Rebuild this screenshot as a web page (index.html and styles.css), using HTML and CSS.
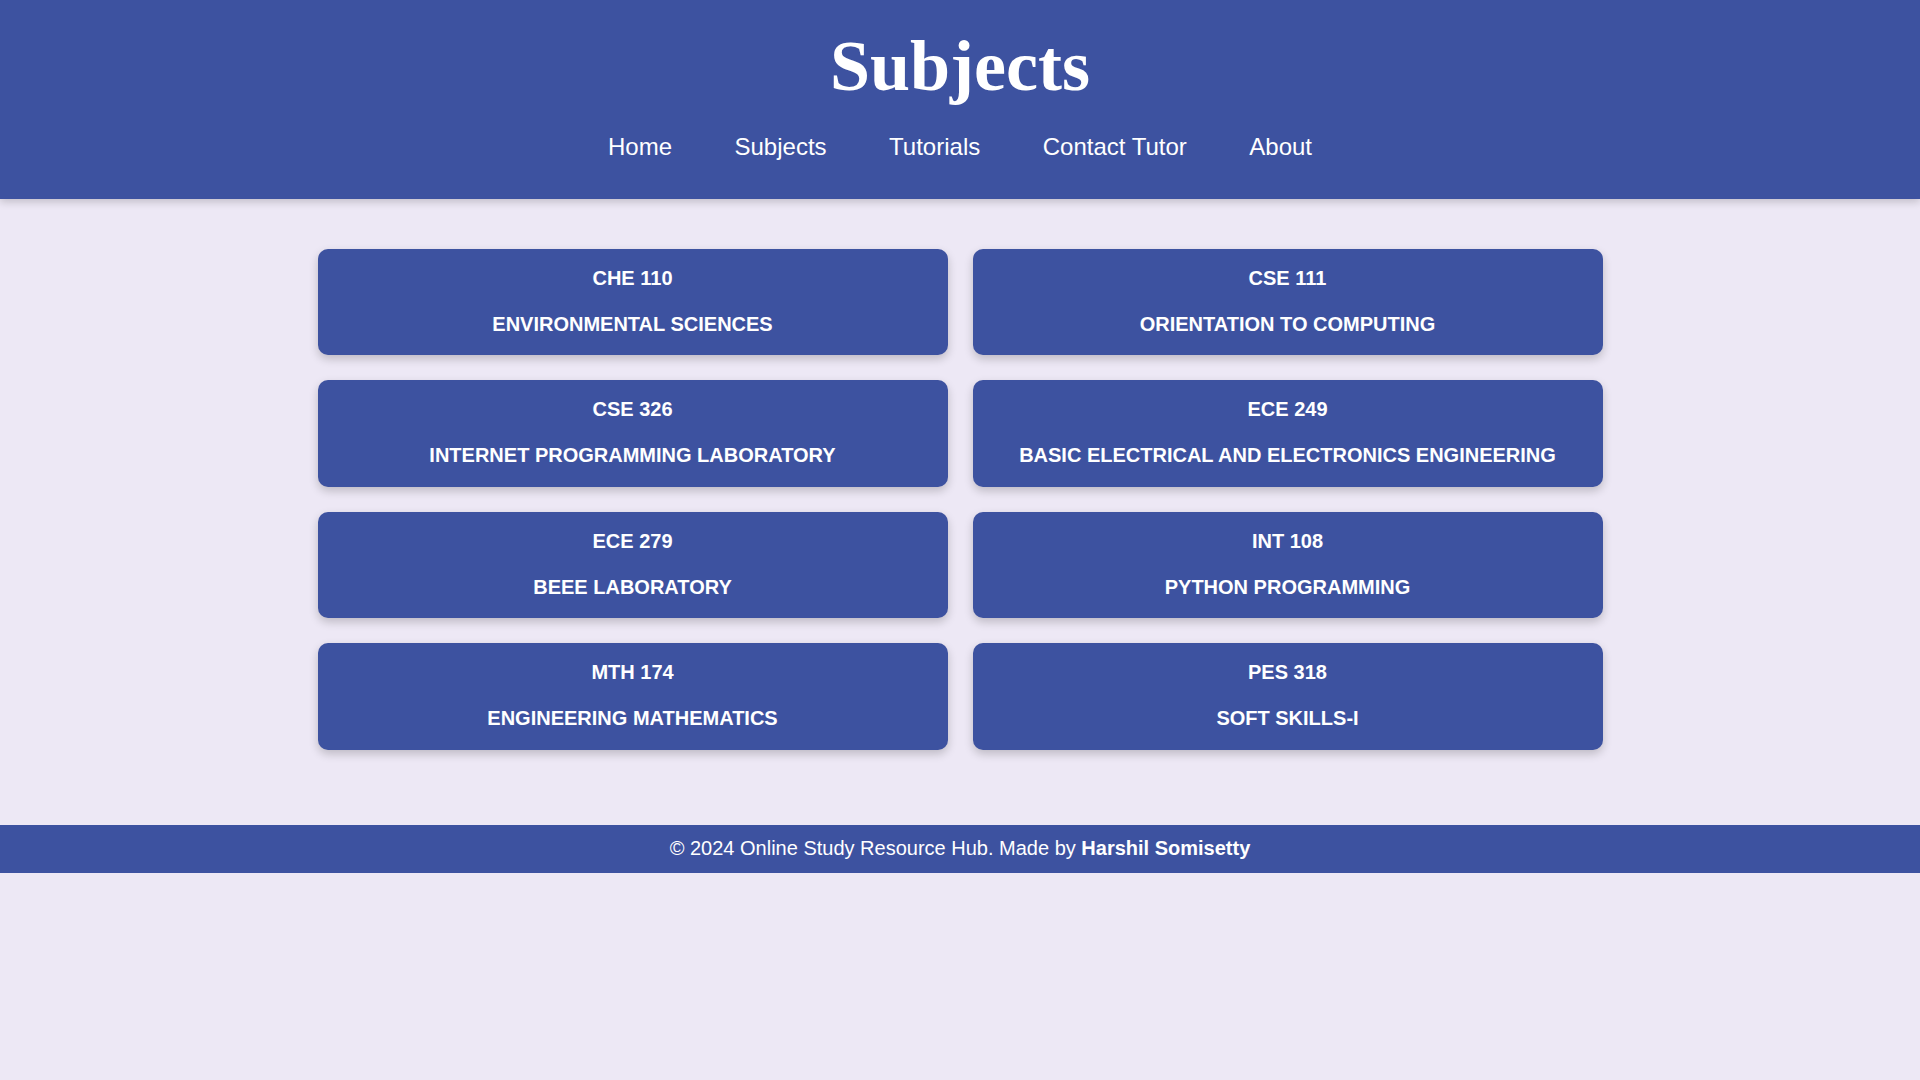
FILE: index.html
```html
<!DOCTYPE html>
<html lang="en">
<head>
<meta charset="utf-8">
<title>Subjects</title>
<link rel="stylesheet" href="styles.css">
</head>
<body>
<header class="site-header">
  <h1 class="title">Subjects</h1>
  <nav class="nav">
    <a href="#">Home</a>
    <a href="#">Subjects</a>
    <a href="#">Tutorials</a>
    <a href="#">Contact Tutor</a>
    <a href="#">About</a>
  </nav>
</header>
<main class="main">
  <div class="grid">
    <a class="card" href="#"><span class="code">CHE 110</span><span class="name">ENVIRONMENTAL SCIENCES</span></a>
    <a class="card" href="#"><span class="code">CSE 111</span><span class="name">ORIENTATION TO COMPUTING</span></a>
    <a class="card" href="#"><span class="code">CSE 326</span><span class="name">INTERNET PROGRAMMING LABORATORY</span></a>
    <a class="card" href="#"><span class="code">ECE 249</span><span class="name">BASIC ELECTRICAL AND ELECTRONICS ENGINEERING</span></a>
    <a class="card" href="#"><span class="code">ECE 279</span><span class="name">BEEE LABORATORY</span></a>
    <a class="card" href="#"><span class="code">INT 108</span><span class="name">PYTHON PROGRAMMING</span></a>
    <a class="card" href="#"><span class="code">MTH 174</span><span class="name">ENGINEERING MATHEMATICS</span></a>
    <a class="card" href="#"><span class="code">PES 318</span><span class="name">SOFT SKILLS-I</span></a>
  </div>
</main>
<footer class="site-footer">
  © 2024 Online Study Resource Hub. Made by <strong>Harshil Somisetty</strong>
</footer>
</body>
</html>
```
FILE: styles.css
```css
html, body {
  margin: 0;
  padding: 0;
}
body {
  background: #EDE8F5;
  font-family: "Liberation Sans", Arial, sans-serif;
  color: #ffffff;
}
.site-header {
  background: #3D52A0;
  padding: 25px 0 38px;
  text-align: center;
  box-shadow: 0 3px 8px rgba(0, 0, 0, 0.18);
  position: relative;
}
.title {
  margin: 0 0 25px;
  font-family: "Liberation Serif", "Times New Roman", serif;
  font-weight: bold;
  font-size: 72px;
  line-height: normal;
  color: #ffffff;
}
.nav {
  display: flex;
  justify-content: center;
  gap: 62.5px;
}
.nav a {
  color: #ffffff;
  text-decoration: none;
  font-size: 24px;
  line-height: normal;
}
.main {
  padding: 50px 0 75px;
}
.grid {
  width: 1285px;
  margin: 0 auto;
  display: grid;
  grid-template-columns: 1fr 1fr;
  gap: 25px;
}
.card {
  background: #3D52A0;
  border-radius: 10px;
  box-shadow: 0 4px 10px rgba(0, 0, 0, 0.2);
  padding: 18px 10px;
  display: flex;
  flex-direction: column;
  align-items: center;
  gap: 23px;
  color: #ffffff;
  text-decoration: none;
  font-weight: bold;
  font-size: 20px;
  line-height: 23px;
  height: 106.4px;
  box-sizing: border-box;
}
.site-footer {
  background: #3D52A0;
  text-align: center;
  font-size: 20px;
  line-height: 23px;
  padding: 12px 0 13px;
}
.site-footer strong {
  font-weight: bold;
}
```
